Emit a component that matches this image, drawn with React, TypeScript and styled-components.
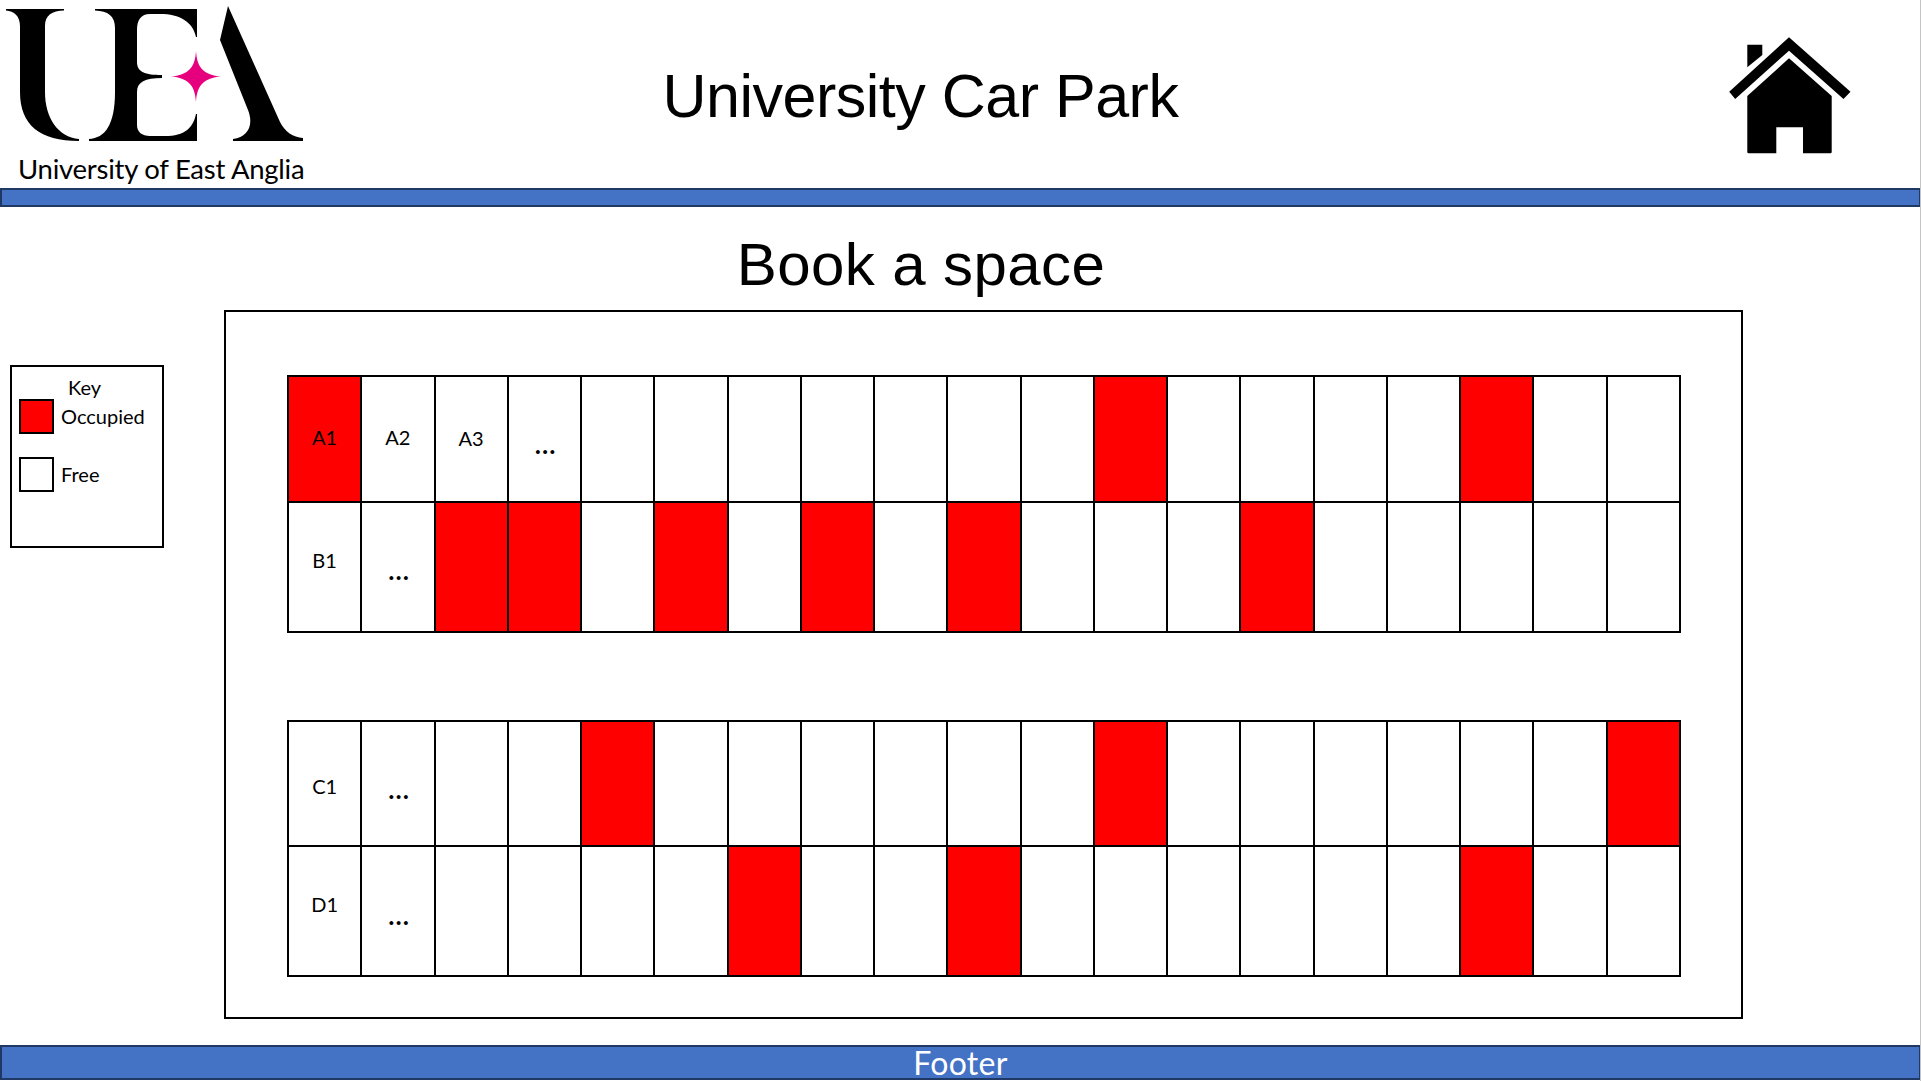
import styled, { createGlobalStyle } from 'styled-components'
import React from 'react'

const GlobalStyle = createGlobalStyle`
  html, body {
    margin: 0;
    padding: 0;
    background: #ffffff;
  }
`

const Page = styled.div`
  width: 1920px;
  height: 1081px;
  border-right: 1px solid #c4c4c4;
  display: flex;
  flex-direction: column;
  font-family: 'Lato', 'Liberation Sans', sans-serif;
  color: #000000;
  overflow: hidden;
`

const Header = styled.header`
  height: 188px;
  display: flex;
  align-items: flex-start;
`

const Logo = styled.a`
  width: 310px;
  flex: none;
  display: flex;
  flex-direction: column;
  color: #000000;
`

const LogoMark = styled.svg`
  display: block;
  width: 310px;
  height: 148px;
`

const LogoText = styled.span`
  margin-top: 4px;
  padding-left: 18px;
  font-size: 27.5px;
  line-height: 34px;
  letter-spacing: -0.25px;
  white-space: nowrap;
`

const Title = styled.h1`
  flex: 1;
  margin: 60px 0 0;
  text-align: center;
  font-family: 'Liberation Sans', Arial, sans-serif;
  font-weight: 400;
  font-size: 61px;
  line-height: 72px;
  letter-spacing: -0.5px;
`

const HomeLink = styled.a`
  width: 389px;
  flex: none;
  padding: 36px 0 0 198px;
  box-sizing: border-box;
`

const HomeIcon = styled.svg`
  display: block;
  width: 122px;
  height: 118px;
`

const Bar = styled.div`
  box-sizing: border-box;
  width: 1921px;
  flex: none;
  background: #4472c4;
  border: 2px solid #203864;
`

const TopBar = styled(Bar)`
  height: 19px;
`

const Heading = styled.h2`
  height: 103px;
  margin: 0;
  padding-right: 78px;
  text-align: center;
  font-family: 'Liberation Sans', Arial, sans-serif;
  font-weight: 400;
  font-size: 60px;
  line-height: 116px;
  letter-spacing: 0.4px;
`

const Body = styled.main`
  flex: 1;
  display: flex;
  align-items: flex-start;
  padding-left: 10px;
`

const KeyBox = styled.aside`
  box-sizing: border-box;
  width: 154px;
  height: 183px;
  margin: 55px 60px 0 0;
  padding: 9px 7px 0;
  border: 2px solid #000000;
  font-size: 20px;
`

const KeyTitle = styled.div`
  padding-left: 49px;
  line-height: 22px;
`

const KeyRow = styled.div`
  display: flex;
  gap: 7px;
  margin-top: 1px;

  & + & {
    margin-top: 23px;
  }
`

const Swatch = styled.span<{ $occupied?: boolean }>`
  box-sizing: border-box;
  width: 35px;
  height: 35px;
  flex: none;
  border: 2px solid #000000;
  background: ${(props) => (props.$occupied ? '#ff0000' : '#ffffff')};
`

const KeyLabel = styled.span<{ $lift: number }>`
  line-height: 22px;
  padding-top: ${(props) => props.$lift}px;
`

const CarPark = styled.section`
  box-sizing: border-box;
  width: 1519px;
  height: 709px;
  padding: 63px 0 0 61px;
  border: 2px solid #000000;
`

const Block = styled.div`
  width: 1392px;
  border-top: 2px solid #000000;
  border-left: 2px solid #000000;

  & + & {
    margin-top: 87px;
  }
`

const Row = styled.div<{ $height: number }>`
  display: grid;
  grid-template-columns: repeat(19, 1fr);
  height: ${(props) => props.$height}px;
`

const Cell = styled.div<{ $occupied?: boolean; $shift?: number }>`
  box-sizing: border-box;
  display: flex;
  align-items: center;
  justify-content: center;
  border-right: 2px solid #000000;
  border-bottom: 2px solid #000000;
  background: ${(props) => (props.$occupied ? '#ff0000' : '#ffffff')};
  font-size: 20px;
  padding-top: ${(props) => Math.max(props.$shift ?? 0, 0) * 2}px;
  padding-bottom: ${(props) => Math.max(-(props.$shift ?? 0), 0) * 2}px;
`

const Dots = styled.span`
  padding-left: 3px;
  font-size: 24px;
  font-weight: 900;
  letter-spacing: 1.5px;
`

const Footer = styled(Bar)`
  height: 35px;
  margin-bottom: 1px;
  color: #ffffff;
  text-align: center;
  font-size: 32px;
  line-height: 31px;
  letter-spacing: 0.3px;
`

interface RowData {
  height: number
  occupied: number[]
  labels: { [col: number]: { text: string; shift: number } }
}

const blocks: RowData[][] = [
  [
    {
      height: 126,
      occupied: [0, 11, 16],
      labels: {
        0: { text: 'A1', shift: -2 },
        1: { text: 'A2', shift: -2 },
        2: { text: 'A3', shift: -1 },
        3: { text: '...', shift: 5 },
      },
    },
    {
      height: 130,
      occupied: [2, 3, 5, 7, 9, 13],
      labels: {
        0: { text: 'B1', shift: -7 },
        1: { text: '...', shift: 3 },
      },
    },
  ],
  [
    {
      height: 125,
      occupied: [4, 11, 18],
      labels: {
        0: { text: 'C1', shift: 2 },
        1: { text: '...', shift: 6 },
      },
    },
    {
      height: 130,
      occupied: [6, 9, 16],
      labels: {
        0: { text: 'D1', shift: -7 },
        1: { text: '...', shift: 4 },
      },
    },
  ],
]

const columns = Array.from({ length: 19 }, (_, i) => i)

export default function App() {
  return (
    <>
      <GlobalStyle />
      <Page>
        <Header>
          <Logo>
            <LogoMark viewBox="0 0 310 148">
              <path d="M6 9 L64 9 L64 10.5 C52 11 45 15 45 26 L45 92 C45 118 58 137 79 139 L79 141 C40 141 20 125 20 92 L20 26 C20 16 14 11 6 10.5 Z" />
              <path d="M95 9 L197 9 L197 37 L196 37 C193 22 180 14 160 14 L150 14 C141 14 137 20 137 30 L137 62 C137 72 145 75 162 75 L162 78 C145 78 137 82 137 92 L137 125 C137 132 142 136 150 136 L165 136 C185 136 193 128 196 114 L197 114 L197 141 L89 141 L89 139 C105 138 115 125 115 92 L115 28 C115 16 108 11 95 10.5 Z" />
              <path d="M228 6 L280 122 C285 132 293 137 303 138 L303 141 L233 141 L233 139 C248 137 254 125 248 110 L220 40 Z" />
              <path
                fill="#e6007e"
                d="M196 51 C197 68 204 75 221 76.5 C204 78 197 85 196 102 C195 85 188 78 171 76.5 C188 75 195 68 196 51 Z"
              />
            </LogoMark>
            <LogoText>University of East Anglia</LogoText>
          </Logo>
          <Title>University Car Park</Title>
          <HomeLink>
            <HomeIcon viewBox="0 0 122 118">
              <path d="M60 1.3 L121.5 55.7 L114.5 63 L60 14.7 L6.2 63 L0.2 55.7 Z" />
              <path d="M18.3 8.7 L33.3 8.7 L33.3 19 L18.3 31.3 Z" />
              <path d="M60 22.3 L102.7 60 L102.7 116 Q102.7 117.3 101.4 117.3 L74 117.3 L74 91.3 L47.3 91.3 L47.3 117.3 L19.6 117.3 Q18.3 117.3 18.3 116 L18.3 60 Z" />
            </HomeIcon>
          </HomeLink>
        </Header>
        <TopBar />
        <Heading>Book a space</Heading>
        <Body>
          <KeyBox>
            <KeyTitle>Key</KeyTitle>
            <KeyRow>
              <Swatch $occupied />
              <KeyLabel $lift={6}>Occupied</KeyLabel>
            </KeyRow>
            <KeyRow>
              <Swatch />
              <KeyLabel $lift={6}>Free</KeyLabel>
            </KeyRow>
          </KeyBox>
          <CarPark>
            {blocks.map((rows, b) => (
              <Block key={b}>
                {rows.map((row, r) => (
                  <Row key={r} $height={row.height}>
                    {columns.map((col) => {
                      const label = row.labels[col]
                      return (
                        <Cell
                          key={col}
                          $occupied={row.occupied.includes(col)}
                          $shift={label?.shift}
                        >
                          {label?.text === '...' ? <Dots>...</Dots> : label?.text}
                        </Cell>
                      )
                    })}
                  </Row>
                ))}
              </Block>
            ))}
          </CarPark>
        </Body>
        <Footer>Footer</Footer>
      </Page>
    </>
  )
}
